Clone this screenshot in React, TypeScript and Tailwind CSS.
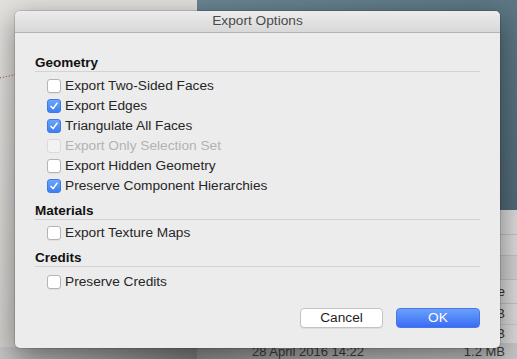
import React from "react";

type Item = { label: string; checked?: boolean; disabled?: boolean };

const geometry: Item[] = [
  { label: "Export Two-Sided Faces" },
  { label: "Export Edges", checked: true },
  { label: "Triangulate All Faces", checked: true },
  { label: "Export Only Selection Set", disabled: true },
  { label: "Export Hidden Geometry" },
  { label: "Preserve Component Hierarchies", checked: true },
];

const Checkbox = ({ checked, disabled }: { checked?: boolean; disabled?: boolean }) => {
  if (checked) {
    return (
      <span className="flex h-[14px] w-[14px] items-center justify-center rounded-[3px] border border-[#3f78e8] bg-gradient-to-b from-[#6aa5fb] to-[#3d7ef3]">
        <svg width="10" height="10" viewBox="0 0 10 10">
          <path d="M2 5.4 L4.1 7.6 L8 2.2" fill="none" stroke="#fff" strokeWidth="1.5" strokeLinecap="round" strokeLinejoin="round" />
        </svg>
      </span>
    );
  }
  return (
    <span
      className={
        disabled
          ? "h-[14px] w-[14px] rounded-[3px] border border-[#dadada] bg-[#f2f2f2]"
          : "h-[14px] w-[14px] rounded-[3px] border border-[#b4b4b4] bg-white shadow-[0_1px_0_rgba(0,0,0,0.05)]"
      }
    />
  );
};

const Row = ({ label, checked, disabled }: Item) => (
  <div className="flex h-[20px] items-center gap-[4px] pl-[12px]">
    <Checkbox checked={checked} disabled={disabled} />
    <span className={disabled ? "text-[#b3b3b3]" : "text-[#262626]"}>{label}</span>
  </div>
);

const Heading = ({ children, className = "" }: { children: React.ReactNode; className?: string }) => (
  <div className={`h-[18px] border-b border-[#d3d3d3] text-[13.5px] font-bold leading-[17px] text-[#111] ${className}`}>
    {children}
  </div>
);

export default function App() {
  return (
    <div
      className="relative h-[359px] w-[517px] overflow-hidden"
      style={{ fontFamily: '"Liberation Sans", Arial, sans-serif' }}
    >
      {/* backdrop */}
      <div className="flex h-full w-full">
        <div className="relative w-[197px] bg-gradient-to-b from-[#e2e1de] via-[#d9d8d5] to-[#cfcecb]">
          <svg className="absolute left-0 top-[72px]" width="20" height="8" viewBox="0 0 20 8">
            <path d="M0 6 L18 2" stroke="#9a3b3b" strokeWidth="1" strokeDasharray="1 2" />
          </svg>
          <div className="absolute bottom-0 left-0 h-[12px] w-full bg-gradient-to-r from-[#c4c4c4] to-[#7c7c7c]" />
        </div>
        <div className="flex flex-1 flex-col">
          <div className="h-[213px] bg-gradient-to-br from-[#6a8593] to-[#4f6876]" />
          <div className="flex flex-1 flex-col bg-[#d8d8d8] text-[13.5px] text-[#333]">
            <div className="h-[25px] border-b border-[#bfbfbf]" />
            <div className="h-[21px] border-b border-[#bfbfbf]" />
            <div className="h-[24px] border-b border-[#bfbfbf] bg-[#cfcfcf]" />
            <div className="flex h-[24px] items-center justify-end border-b border-[#bfbfbf] pr-[12px] leading-none">Size</div>
            <div className="flex h-[21px] items-center justify-end border-b border-[#c8c8c8] pr-[12px] leading-none">1.2 MB</div>
            <div className="flex h-[18px] items-center justify-end pr-[12px] leading-none">1.2 MB</div>
            <div className="flex h-[16px] items-end justify-between bg-gradient-to-r from-[#8e8e8e] via-[#b4b4b4] to-[#c4c4c4] pl-[55px] pr-[12px] text-[13px] leading-[15px] text-[#3a3a3a]">
              <span>28 April 2016 14:22</span>
              <span>1.2 MB</span>
            </div>
          </div>
        </div>
      </div>

      {/* dialog */}
      <div className="absolute left-[15px] top-[11px] flex h-[337px] w-[485px] flex-col overflow-hidden rounded-[5px] bg-[#ececec] shadow-[0_8px_28px_rgba(0,0,0,0.45),0_0_0_1px_rgba(0,0,0,0.12)]">
        <div className="flex h-[22px] items-center justify-center border-b border-[#b3b3b3] bg-gradient-to-b from-[#ececec] to-[#d8d8d8] text-[13.7px] text-[#4a4a4a]">
          Export Options
        </div>
        <div className="flex flex-1 flex-col pl-[20px] pr-[20px] pt-[21px] text-[13.7px] leading-[16px]">
          <Heading>Geometry</Heading>
          <div className="mt-[4px]">
            {geometry.map((g) => (
              <Row key={g.label} {...g} />
            ))}
          </div>
          <Heading className="mt-[6px]">Materials</Heading>
          <div className="mt-[3px]">
            <Row label="Export Texture Maps" />
          </div>
          <Heading className="mt-[6px]">Credits</Heading>
          <div className="mt-[5px]">
            <Row label="Preserve Credits" />
          </div>
          <div className="mt-[16px] flex justify-end gap-[13px]">
            <button className="flex h-[20px] w-[83px] items-center justify-center rounded-[4px] border border-[#c3c3c3] bg-white text-[#1f1f1f] shadow-[0_1px_0_rgba(0,0,0,0.06)]">
              Cancel
            </button>
            <button className="flex h-[20px] w-[84px] items-center justify-center rounded-[4px] border border-[#4876ea] bg-gradient-to-b from-[#6aa0fa] to-[#3a6cf4] text-white">
              OK
            </button>
          </div>
        </div>
      </div>
    </div>
  );
}
